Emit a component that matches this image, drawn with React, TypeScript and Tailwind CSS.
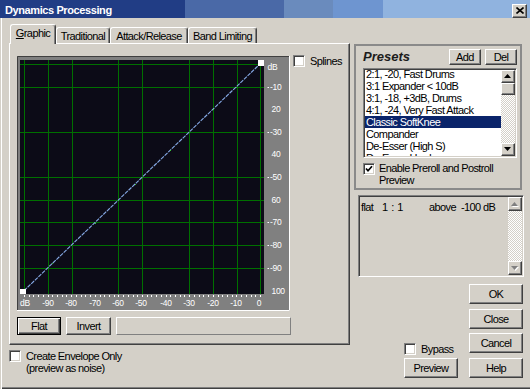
import React from "react";

const raised =
  "border border-t-white border-l-white border-r-[#404040] border-b-[#404040] shadow-[inset_-1px_-1px_0_#808080]";
const sunken =
  "border border-t-[#808080] border-l-[#808080] border-r-white border-b-white shadow-[inset_1px_1px_0_#404040,inset_-1px_-1px_0_#d4d0c8]";
const checker =
  "bg-[repeating-conic-gradient(#d4d0c8_0_25%,#ffffff_0_50%)] bg-[length:2px_2px]";

const presets = [
  "2:1, -20, Fast Drums",
  "3:1 Expander < 10dB",
  "3:1, -18, +3dB, Drums",
  "4:1, -24, Very Fast Attack",
  "Classic SoftKnee",
  "Compander",
  "De-Esser (High S)",
  "De-Esser Hard",
];

const tabs = [
  { label: "Graphic", w: "w-[46px]", active: true },
  { label: "Traditional", w: "w-[54px]", active: false },
  { label: "Attack/Release", w: "w-[78px]", active: false },
  { label: "Band Limiting", w: "w-[69px]", active: false },
];

function CheckBox({ checked = false }: { checked?: boolean }) {
  return (
    <span
      className={`${sunken} flex h-[12px] w-[12px] shrink-0 items-center justify-center bg-white`}
    >
      {checked && (
        <svg width="8" height="8" viewBox="0 0 8 8">
          <path d="M1 3.5 L3 5.8 L7 1.2" stroke="#000" strokeWidth="1.7" fill="none" />
        </svg>
      )}
    </span>
  );
}

function Arrow({ up = false, disabled = false }: { up?: boolean; disabled?: boolean }) {
  const pts = up ? "3.5,0 7,4 0,4" : "0,0 7,0 3.5,4";
  return (
    <svg width="8" height="5" viewBox="0 0 8 5">
      {disabled && <polygon points={pts} fill="#ffffff" transform="translate(1,1)" />}
      <polygon points={pts} fill={disabled ? "#808080" : "#000000"} />
    </svg>
  );
}

function Btn({ children, className = "" }: { children: React.ReactNode; className?: string }) {
  return (
    <button
      type="button"
      className={`${raised} flex items-center justify-center bg-[#d4d0c8] ${className}`}
    >
      {children}
    </button>
  );
}

function Graph() {
  const vLines = [7, 31, 55, 101, 125, 172, 196, 220, 243];
  const hLines = [8, 31, 76, 121, 144, 166, 189, 212];
  const right = [
    { t: "dB", y: 10.5, x: 250.5, tick: false },
    { t: "-10", y: 31, x: 253, tick: true },
    { t: "20", y: 53, x: 254.5, tick: false },
    { t: "-30", y: 76, x: 253, tick: true },
    { t: "40", y: 98, x: 254.5, tick: false },
    { t: "-50", y: 121, x: 253, tick: true },
    { t: "60", y: 143.5, x: 254.5, tick: false },
    { t: "-70", y: 166, x: 253, tick: true },
    { t: "-80", y: 189, x: 253, tick: true },
    { t: "-90", y: 212, x: 253, tick: true },
    { t: "100", y: 234.5, x: 254.5, tick: false },
  ];
  const bottom: [string, number][] = [
    ["dB", 8],
    ["-90", 31],
    ["-80", 54],
    ["-70", 78],
    ["-60", 101],
    ["-50", 124],
    ["-40", 149],
    ["-30", 172],
    ["-20", 196],
    ["-10", 219],
    ["0", 242],
  ];
  const ticks = Array.from({ length: 51 }, (_, i) => Math.round(7 + i * 4.72));
  // a few green pixels sit on the curve in the reference
  const dots = [0.12, 0.3, 0.47, 0.62, 0.8, 0.9];

  return (
    <svg width="273" height="255" viewBox="0 0 273 255" className="block shrink-0">
      <rect width="273" height="255" fill="#808080" />
      <path d="M0.5 255 V0.5 H273" stroke="#404040" fill="none" />
      <path d="M0 254.5 H272.5 V0" stroke="#ffffff" fill="none" />
      <rect x="3" y="4" width="244" height="234" fill="#0c0b17" />
      {vLines.map((x) => (
        <line key={`v${x}`} x1={x + 0.5} x2={x + 0.5} y1={4} y2={238} stroke="#007000" />
      ))}
      {hLines.map((y) => (
        <line key={`h${y}`} x1={3} x2={247} y1={y + 0.5} y2={y + 0.5} stroke="#007000" />
      ))}
      <line
        x1="7"
        y1="234.7"
        x2="243"
        y2="8"
        stroke="#86aae6"
        strokeWidth="1.1"
        strokeDasharray="4 1"
      />
      {dots.map((f) => (
        <rect
          key={`d${f}`}
          x={Math.round(7 + f * 236)}
          y={Math.round(234.7 - f * 226.7)}
          width="1"
          height="1"
          fill="#3bc43b"
        />
      ))}
      <rect x="3" y="233" width="6" height="5" fill="#ffffff" />
      <rect x="241" y="4" width="6" height="6" fill="#ffffff" />
      {ticks.map((x) => (
        <rect key={`t${x}`} x={x} y={239} width="1" height="2" fill="#ffffff" />
      ))}
      <g fontFamily="Liberation Sans, Arial, sans-serif" fontSize="8.5" fill="#ffffff" letterSpacing="-0.3">
        {right.map((r) => (
          <g key={r.t}>
            {r.tick && <rect x={250.5} y={r.y} width="1.5" height="1" fill="#ffffff" />}
            <text x={r.x} y={r.y + 3}>
              {r.t}
            </text>
          </g>
        ))}
        {bottom.map(([t, x]) => (
          <text key={`b${t}`} x={x} y={249.5} textAnchor="middle">
            {t}
          </text>
        ))}
      </g>
    </svg>
  );
}

function TitleBar() {
  return (
    <div className="flex h-[18px] items-center justify-between bg-[linear-gradient(90deg,#213d85_0px,#213d85_185px,#4a69a7_185px,#4a69a7_284px,#6a8bbd_284px,#6a8bbd_333px,#6e95d0_333px,#6e95d0_383px,#90b3df_383px)] pl-[5px] pr-[3px]">
      <span className="pt-px text-[11px] font-bold tracking-[-0.4px] text-white">
        Dynamics Processing
      </span>
      <Btn className="mt-[3px] h-[14px] w-[15px]">
        <svg width="8" height="7" viewBox="0 0 8 7">
          <path d="M0.5 0.5 L7.5 6.5 M7.5 0.5 L0.5 6.5" stroke="#000" strokeWidth="1.6" />
        </svg>
      </Btn>
    </div>
  );
}

function LeftColumn() {
  return (
    <div className="w-[350px] shrink-0">
      {/* tabs */}
      <div className="mt-[6px] ml-[10px] flex h-[20px] items-end">
        {tabs.map((t) => (
          <div
            key={t.label}
            className={`flex items-center justify-center rounded-t-[3px] border-t border-l border-r border-t-white border-l-white border-r-[#404040] bg-[#d4d0c8] shadow-[inset_-1px_0_0_#808080] ${t.w} ${
              t.active ? "relative z-10 h-[20px] pb-[3px]" : "mb-px h-[16px]"
            }`}
          >
            {t.active ? (
              <span>
                <span className="underline">G</span>raphic
              </span>
            ) : (
              <span>{t.label}</span>
            )}
          </div>
        ))}
      </div>

      {/* panel */}
      <div className="relative -mt-px ml-[9px] h-[302px] w-[341px] border border-t-white border-l-white border-r-[#404040] border-b-[#404040] pt-[12px] pl-[7px] shadow-[inset_-1px_-1px_0_#808080]">
        <div className="flex items-start">
          <Graph />
          <div className="-mt-px ml-[3px] flex items-center">
            <CheckBox />
            <span className="ml-[5px]">Splines</span>
          </div>
        </div>
        <div className="mt-[6px] flex">
          <button
            type="button"
            className="flex h-[18px] w-[44px] items-center justify-center border border-black bg-[#d4d0c8] shadow-[inset_1px_1px_0_#fff,inset_-1px_-1px_0_#404040,inset_-2px_-2px_0_#808080]"
          >
            Flat
          </button>
          <Btn className="ml-[5px] h-[18px] w-[45px]">Invert</Btn>
          <div className="ml-[5px] h-[18px] w-[175px] border border-t-white border-l-white border-r-[#808080] border-b-[#808080]" />
        </div>
      </div>

      {/* envelope option */}
      <div className="mt-[5px] ml-[9px] flex items-start">
        <CheckBox />
        <div className="ml-[5px] leading-[12px]">
          <div>Create Envelope Only</div>
          <div>(preview as noise)</div>
        </div>
      </div>
    </div>
  );
}

function RightColumn() {
  return (
    <div className="flex w-[180px] flex-col">
      {/* presets group */}
      <div className="mt-[26px] ml-[4px] h-[146px] w-[168px] border-2 border-[#8a8a8a] pt-[3px] pr-[3px] pl-[7px]">
        <div className="flex h-[16px] items-center">
          <span className="text-[13px] font-bold italic tracking-[0px] text-[#1c1c1c]">Presets</span>
          <Btn className="ml-auto h-[16px] w-[32px]">Add</Btn>
          <Btn className="ml-[4px] h-[16px] w-[32px]">Del</Btn>
        </div>
        <div className={`${sunken} mt-[3px] flex h-[90px] bg-white p-px`}>
          <div className="flex-1 overflow-hidden">
            <div className="-mt-[2px]">
              {presets.map((p) => (
                <div
                  key={p}
                  className={`h-[12px] pl-px leading-[12px] whitespace-nowrap ${
                    p === "Classic SoftKnee" ? "bg-[#0a246a] text-white" : ""
                  }`}
                >
                  {p}
                </div>
              ))}
            </div>
          </div>
          <div className="flex w-[14px] flex-col">
            <Btn className="h-[13px] w-full">
              <Arrow up />
            </Btn>
            <div className={`${raised} h-[12px] bg-[#d4d0c8]`} />
            <div className={`flex-1 ${checker}`} />
            <Btn className="h-[13px] w-full">
              <Arrow />
            </Btn>
          </div>
        </div>
        <div className="mt-[4px] flex items-start">
          <span className="mt-px">
            <CheckBox checked />
          </span>
          <div className="ml-[4px] leading-[12px]">
            <div>Enable Preroll and Postroll</div>
            <div>Preview</div>
          </div>
        </div>
      </div>

      {/* info box */}
      <div className={`${sunken} mt-[5px] ml-[8px] flex h-[82px] w-[166px] p-px`}>
        <div className="flex flex-1 items-start pt-[4px] pl-px whitespace-nowrap">
          <span className="w-[21px]">flat</span>
          <span className="w-[47px] whitespace-pre tracking-normal">1 : 1</span>
          <span className="w-[32px]">above</span>
          <span>-100 dB</span>
        </div>
        <div className="flex w-[14px] flex-col">
          <Btn className="h-[14px] w-full">
            <Arrow up disabled />
          </Btn>
          <div className={`flex-1 ${checker}`} />
          <Btn className="h-[14px] w-full">
            <Arrow disabled />
          </Btn>
        </div>
      </div>

      {/* buttons */}
      <div className="mt-[7px] ml-[54px] flex">
        <div className="flex w-[54px] flex-col justify-end">
          <div className="flex items-center">
            <CheckBox />
            <span className="ml-[5px]">Bypass</span>
          </div>
          <Btn className="mt-[3px] h-[20px] w-[54px]">Preview</Btn>
        </div>
        <div className="ml-[11px] flex w-[54px] flex-col">
          <Btn className="h-[20px] w-[54px]">OK</Btn>
          <Btn className="mt-[5px] h-[20px] w-[54px]">Close</Btn>
          <Btn className="mt-[4px] h-[20px] w-[54px]">Cancel</Btn>
          <Btn className="mt-[5px] h-[20px] w-[54px]">Help</Btn>
        </div>
      </div>
    </div>
  );
}

export default function App() {
  return (
    <div className="relative h-[389px] w-[530px] overflow-hidden bg-[#d4d0c8] font-['Liberation_Sans',Arial,sans-serif] text-[11px] leading-[12px] tracking-[-0.6px] text-black shadow-[inset_1px_0_0_#d4d0c8,inset_2px_0_0_#fff,inset_0_-1px_0_#404040,inset_0_-2px_0_#808080]">
      <TitleBar />
      <div className="flex">
        <LeftColumn />
        <RightColumn />
      </div>
    </div>
  );
}
